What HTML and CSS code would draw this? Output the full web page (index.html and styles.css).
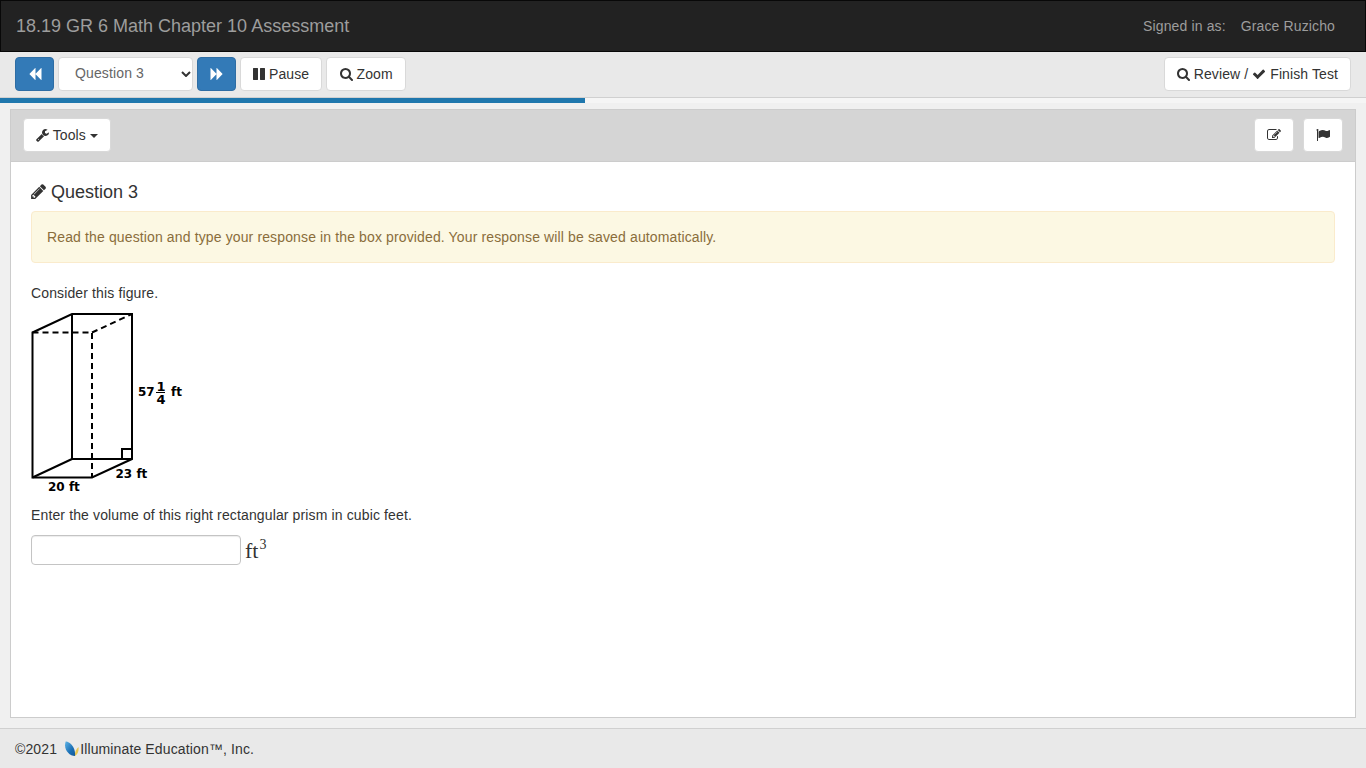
FILE: index.html
```html
<!DOCTYPE html>
<html lang="en">
<head>
<meta charset="utf-8">
<title>18.19 GR 6 Math Chapter 10 Assessment</title>
<link rel="stylesheet" href="styles.css">
</head>
<body>
<svg class="defs" width="0" height="0" aria-hidden="true">
  <defs>
    <linearGradient id="wing" x1="0" y1="0" x2="1" y2="1"><stop offset="0" stop-color="#5fb4e6"/><stop offset="0.6" stop-color="#1a6fb5"/><stop offset="1" stop-color="#155a96"/></linearGradient>
  </defs>
  <symbol id="i-backward" viewBox="0 0 1792 1792"><path d="M1683 141q19-19 32-13t13 32v1472q0 26-13 32t-32-13l-710-710q-9-9-13-19v710q0 26-13 32t-32-13l-710-710q-19-19-19-45t19-45l710-710q19-19 32-13t13 32v710q4-10 13-19z"/></symbol>
  <symbol id="i-forward" viewBox="0 0 1792 1792"><path d="M109 1651q-19 19-32 13t-13-32v-1472q0-26 13-32t32 13l710 710q9 9 13 19v-710q0-26 13-32t32 13l710 710q19 19 19 45t-19 45l-710 710q-19 19-32 13t-13-32v-710q-4 10-13 19z"/></symbol>
  <symbol id="i-pause" viewBox="128 0 1536 1792"><path d="M1664 192v1408q0 26-19 45t-45 19h-512q-26 0-45-19t-19-45v-1408q0-26 19-45t45-19h512q26 0 45 19t19 45zm-896 0v1408q0 26-19 45t-45 19h-512q-26 0-45-19t-19-45v-1408q0-26 19-45t45-19h512q26 0 45 19t19 45z"/></symbol>
  <symbol id="i-search" viewBox="64 0 1664 1792"><path d="M1216 832q0-185-131.500-316.500t-316.500-131.500-316.500 131.500-131.500 316.500 131.500 316.500 316.500 131.500 316.500-131.500 131.500-316.500zm512 832q0 52-38 90t-90 38q-54 0-90-38l-343-342q-179 124-399 124-143 0-273.500-55.500t-225-150-150-225-55.500-273.500 55.500-273.500 150-225 225-150 273.500-55.500 273.500 55.500 225 150 150 225 55.500 273.500q0 220-124 399l343 343q37 37 37 90z"/></symbol>
  <symbol id="i-check" viewBox="0 0 1792 1792"><path d="M1671 566q0 40-28 68l-724 724-136 136q-28 28-68 28t-68-28l-136-136-362-362q-28-28-28-68t28-68l136-136q28-28 68-28t68 28l294 295 656-657q28-28 68-28t68 28l136 136q28 28 28 68z"/></symbol>
  <symbol id="i-wrench" viewBox="64 0 1664 1792"><path d="M448 1472q0-26-19-45t-45-19-45 19-19 45 19 45 45 19 45-19 19-45zm644-420l-682 682q-37 37-90 37-52 0-91-37l-106-108q-38-36-38-90 0-53 38-91l681-681q39 98 114.500 173.500t173.500 114.500zm634-435q0 39-23 106-47 134-164.500 217.500t-258.500 83.500q-185 0-316.500-131.500t-131.500-316.500 131.500-316.500 316.500-131.500q58 0 121.500 16.500t107.500 46.500q16 11 16 28t-16 28l-293 169v224l193 107q5-3 79-48.500t135.500-81 70.500-35.500q15 0 23.500 10t8.500 25z"/></symbol>
  <symbol id="i-pencil" viewBox="128 128 1515 1536"><path d="M491 1536l91-91-235-235-91 91v107h128v128h107zm523-928q0-22-22-22-10 0-17 7l-542 542q-7 7-7 17 0 22 22 22 10 0 17-7l542-542q7-7 7-17zm-54-192l416 416-832 832h-416v-416zm683 96q0 53-37 90l-166 166-416-416 166-165q36-38 90-38 53 0 91 38l235 234q37 39 37 91z"/></symbol>
  <symbol id="i-edit" viewBox="0 0 1792 1792"><path d="M888 1184l116-116-152-152-116 116v56h96v96h56zm440-720q-16-16-33 1l-350 350q-17 17-1 33t33-1l350-350q17-17 1-33zm80 594v190q0 119-84.500 203.500t-203.500 84.500h-832q-119 0-203.500-84.500t-84.500-203.500v-832q0-119 84.500-203.500t203.500-84.500h832q63 0 117 25 15 7 18 23 3 17-9 29l-49 49q-14 14-32 8-23-6-45-6h-832q-66 0-113 47t-47 113v832q0 66 47 113t113 47h832q66 0 113-47t47-113v-126q0-13 9-22l64-64q15-15 35-7t20 29zm-96-738l288 288-672 672h-288v-288zm444 132l-92 92-288-288 92-92q28-28 68-28t68 28l152 152q28 28 28 68t-28 68z"/></symbol>
  <symbol id="i-flag" viewBox="0 0 1792 1792"><path d="M320 256q0 72-64 110v1266q0 13-9.500 22.500t-22.500 9.500h-64q-13 0-22.500-9.500t-9.500-22.500v-1266q-64-38-64-110 0-53 37.500-90.500t90.500-37.500 90.500 37.500 37.500 90.500zm1472 64v763q0 25-12.500 38.500t-39.500 27.500q-215 116-369 116-61 0-123.500-22t-108.500-48-115.500-48-142.500-22q-192 0-464 146-17 9-33 9-26 0-45-19t-19-45v-742q0-32 31-55 21-14 79-43 236-120 421-120 107 0 200 29t219 88q38 19 88 19 54 0 117.500-21t110-47 88-47 54.500-21q26 0 45 19t19 45z"/></symbol>
</svg>

<header class="navbar">
  <span class="brand">18.19 GR 6 Math Chapter 10 Assessment</span>
  <span class="user"><span>Signed in as:</span><span>Grace Ruzicho</span></span>
</header>

<nav class="toolbar">
  <div class="tool-group">
    <button class="btn btn-primary" type="button"><svg class="fa"><use href="#i-backward"/></svg></button>
    <select class="question-select"><option>Question 3</option></select>
    <button class="btn btn-primary" type="button"><svg class="fa"><use href="#i-forward"/></svg></button>
    <button class="btn" type="button"><svg class="fa w12"><use href="#i-pause"/></svg> Pause</button>
    <button class="btn btn-zoom" type="button"><svg class="fa w13"><use href="#i-search"/></svg> Zoom</button>
  </div>
  <button class="btn" type="button"><svg class="fa w13"><use href="#i-search"/></svg> Review / <svg class="fa"><use href="#i-check"/></svg> Finish Test</button>
</nav>

<div class="progress"><div class="progress-bar"></div></div>

<main class="panel">
  <div class="panel-heading">
    <button class="btn" type="button"><svg class="fa w13"><use href="#i-wrench"/></svg> Tools <span class="caret"></span></button>
    <div class="heading-actions">
      <button class="btn btn-icon" type="button"><svg class="fa"><use href="#i-edit"/></svg></button>
      <button class="btn btn-icon" type="button"><svg class="fa"><use href="#i-flag"/></svg></button>
    </div>
  </div>
  <div class="panel-body">
    <h3 class="question-title"><svg class="fa-title"><use href="#i-pencil"/></svg> Question 3</h3>
    <div class="alert">Read the question and type your response in the box provided. Your response will be saved automatically.</div>
    <p class="para">Consider this figure.</p>
    <svg class="figure" width="160" height="186" viewBox="0 0 160 186">
      <g class="solid">
        <path d="M1.500 24.500V169.500H61L101 151V6H41L1.500 24.500Z"/>
        <path d="M41 6V151H101"/>
        <path d="M1.500 169.500L41 151"/>
        <path d="M91 151V141H101"/>
      </g>
      <g class="dashed">
        <path d="M1.500 24.500H61V169.500"/>
        <path d="M61 24.500L101 6"/>
      </g>
      <text class="fig-label" x="107" y="88">57</text>
      <text class="fig-frac" x="125.500" y="83">1</text>
      <path class="frac" d="M125 84.500H134"/>
      <text class="fig-frac" x="125.500" y="96">4</text>
      <text class="fig-label" x="140" y="88">ft</text>
      <text class="fig-label" x="84.500" y="170">23 ft</text>
      <text class="fig-label" x="17" y="183">20 ft</text>
    </svg>
    <p class="para prompt">Enter the volume of this right rectangular prism in cubic feet.</p>
    <div class="answer">
      <input class="answer-input" type="text" aria-label="Answer">
      <span class="unit">ft<sup>3</sup></span>
    </div>
  </div>
</main>

<footer class="footer">
  <span>©2021</span>
  <svg class="logo" width="15" height="17" viewBox="0 0 15 17"><path fill="#e9c64f" d="M10.500 16C11 12 12 9 14.500 7C15 11 13.500 15 10.500 16Z"/><path fill="url(#wing)" d="M1.700 1.500C5 1 12 7 11 16C5 16 -1 9 1.700 1.500Z"/></svg><span>Illuminate Education™, Inc.</span>
</footer>
</body>
</html>
```

FILE: styles.css
```css
* { box-sizing: border-box; }
html, body { height: 100%; }
body {
  margin: 0;
  display: flex;
  flex-direction: column;
  height: 768px;
  overflow: hidden;
  background: #f0f0f0;
  color: #333333;
  font: 14px/20px "Liberation Sans", Arial, sans-serif;
  letter-spacing: 0.13px;
}
.defs { position: absolute; }
.fa { width: 14px; height: 14px; fill: currentColor; vertical-align: -2px; }
.w12 { width: 12px; }
.w13 { width: 13px; }
.fa-title { width: 15px; height: 15px; fill: currentColor; vertical-align: -1px; }

.navbar {
  height: 52px;
  flex: none;
  display: flex;
  align-items: center;
  justify-content: space-between;
  padding: 0 30px 0 15px;
  background: #222222;
  border: 1px solid #080808;
  color: #9d9d9d;
}
.brand { font-size: 18px; letter-spacing: 0; }
.user { display: flex; gap: 15px; }

.toolbar {
  height: 46px;
  flex: none;
  display: flex;
  align-items: flex-start;
  justify-content: space-between;
  padding: 5px 15px 0;
  background: #e9e9e9;
  border-bottom: 1px solid #d0d0d0;
}
.tool-group { display: flex; gap: 4px; }

.btn {
  display: inline-block;
  height: 34px;
  padding: 6px 12px;
  font: inherit;
  letter-spacing: 0.1px;
  color: #333333;
  background: #ffffff;
  border: 1px solid #d9d9d9;
  border-radius: 4px;
  white-space: nowrap;
}
.btn-primary {
  width: 39px;
  color: #ffffff;
  background: #337ab7;
  border-color: #2e6da4;
}
.btn-icon { width: 40px; padding: 6px 0; }
.btn-zoom { min-width: 80px; }
.question-select {
  width: 135px;
  height: 34px;
  padding: 0 20px 2px 16px;
  font: inherit;
  letter-spacing: inherit;
  color: #666666;
  appearance: none;
  background: #ffffff url("data:image/svg+xml,%3Csvg xmlns='http://www.w3.org/2000/svg' width='10' height='6' viewBox='0 0 10 6'%3E%3Cpath d='M1 1l4 4 4-4' fill='none' stroke='%23333333' stroke-width='2'/%3E%3C/svg%3E") no-repeat right 1.500px center;
  border: 1px solid #d9d9d9;
  border-radius: 4px;
}

.progress { height: 5px; flex: none; background: #f5f5f5; }
.progress-bar { width: 585px; height: 5px; background: #1f77ad; }

.panel {
  margin: 6px 10px 10px;
  flex: 1;
  min-height: 0;
  background: #ffffff;
  border: 1px solid #cccccc;
  display: flex;
  flex-direction: column;
}
.panel-heading {
  height: 52px;
  flex: none;
  display: flex;
  align-items: flex-start;
  justify-content: space-between;
  padding: 8px 12px 0;
  background: #d5d5d5;
  border-bottom: 1px solid #cccccc;
}
.heading-actions { display: flex; gap: 9px; }
.caret {
  display: inline-block;
  width: 0;
  height: 0;
  vertical-align: middle;
  border-top: 4px solid;
  border-left: 4px solid transparent;
  border-right: 4px solid transparent;
}
.panel-body { padding: 20px; }
.question-title { margin: 0 0 9px; font-size: 18px; font-weight: 500; line-height: 20px; letter-spacing: 0; }
.alert {
  height: 52px;
  padding: 15px;
  margin-bottom: 20px;
  color: #8a6d3b;
  background: #fcf8e3;
  border: 1px solid #faebcc;
  border-radius: 4px;
}
.para { margin: 0 0 10px; }
.figure { display: block; margin-top: -5px; }
.solid path { fill: none; stroke: #000000; stroke-width: 2; }
.dashed path { fill: none; stroke: #000000; stroke-width: 2; stroke-dasharray: 6 4; }
.frac { stroke: #000000; stroke-width: 1; }
.fig-label { font: bold 12px "DejaVu Sans", sans-serif; letter-spacing: 0; fill: #000000; }
.fig-frac { font: bold 13px "DejaVu Sans", sans-serif; letter-spacing: 0; fill: #000000; }
.prompt { margin: 11px 0 8px; }
.answer { display: flex; align-items: center; gap: 4px; }
.answer-input {
  width: 210px;
  height: 30px;
  padding: 5px 10px;
  background: #ffffff;
  border: 1px solid #c4c4c4;
  border-radius: 4px;
  box-shadow: inset 0 1px 1px rgba(0, 0, 0, 0.075);
}
.unit { font: 22px/30px "Liberation Serif", serif; letter-spacing: 0; color: #333333; padding-top: 3px; }
.unit sup { font-size: 14px; line-height: 0; vertical-align: 9px; margin-left: 1px; }

.footer {
  height: 40px;
  flex: none;
  display: flex;
  align-items: center;
  padding: 0 15px;
  background: #e9e9e9;
  border-top: 1px solid #d0d0d0;
}
.logo { margin-left: 7px; margin-right: 1px; }
```
